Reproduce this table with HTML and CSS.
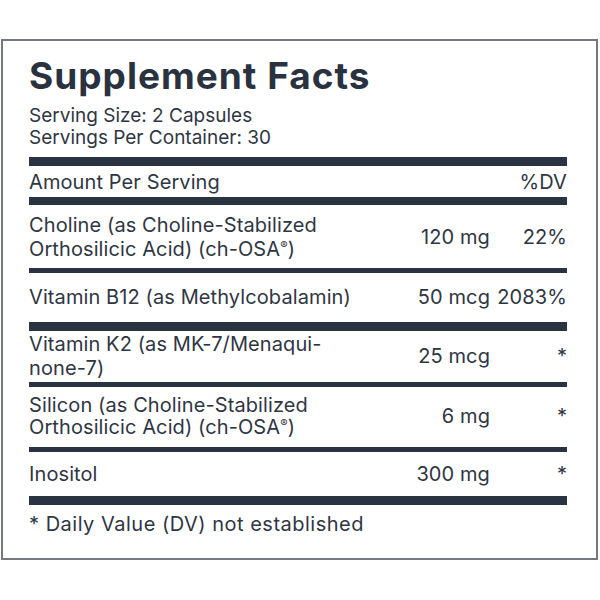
FILE: index.html
```html
<!DOCTYPE html>
<html lang="en">
<head>
<meta charset="utf-8">
<title>Supplement Facts</title>
<link rel="stylesheet" href="styles.css">
</head>
<body>
<div class="label">
  <h1 class="title">Supplement Facts</h1>
  <div class="serving">
    <p>Serving Size: 2 Capsules</p>
    <p>Servings Per Container: 30</p>
  </div>
  <div class="row head">
    <span class="name">Amount Per Serving</span>
    <span class="amt"></span>
    <span class="dv">%DV</span>
  </div>
  <div class="row r-choline thin">
    <span class="name">Choline (as Choline-Stabilized<br>Orthosilicic Acid) (ch-OSA<sup>®</sup>)</span>
    <span class="amt">120 mg</span>
    <span class="dv">22%</span>
  </div>
  <div class="row r-b12">
    <span class="name">Vitamin B12 (as Methylcobalamin)</span>
    <span class="amt">50 mcg</span>
    <span class="dv">2083%</span>
  </div>
  <div class="row r-k2 thin">
    <span class="name">Vitamin K2 (as MK-7/Menaqui-<br>none-7)</span>
    <span class="amt">25 mcg</span>
    <span class="dv">*</span>
  </div>
  <div class="row r-silicon thin">
    <span class="name">Silicon (as Choline-Stabilized<br>Orthosilicic Acid) (ch-OSA<sup>®</sup>)</span>
    <span class="amt">6 mg</span>
    <span class="dv">*</span>
  </div>
  <div class="row r-inositol">
    <span class="name">Inositol</span>
    <span class="amt">300 mg</span>
    <span class="dv">*</span>
  </div>
  <p class="foot">* Daily Value (DV) not established</p>
</div>
</body>
</html>
```

FILE: styles.css
```css
* { box-sizing: border-box; }

html, body {
  margin: 0;
  padding: 0;
  background: #ffffff;
}

body {
  font-family: Inter, Lato, "Liberation Sans", sans-serif;
  color: #2f3643;
}

.label {
  margin: 39px 2px 0 1px;
  width: 597px;
  height: 521px;
  border: 2px solid #75787e;
  padding: 16px 29px 0 26px;
}

.title {
  margin: 0;
  font-size: 37px;
  line-height: 37px;
  font-weight: 700;
  letter-spacing: 1px;
  color: #2a3240;
}

.serving {
  margin-top: 11px;
  padding-bottom: 8px;
  border-bottom: 9px solid #2a3341;
}

.serving p {
  margin: 0;
  font-size: 19px;
  line-height: 22px;
}

.row {
  display: flex;
  align-items: center;
  font-size: 20px;
  line-height: 24px;
  letter-spacing: 0.1px;
  border-bottom: 9px solid #2a3341;
}

.row.thin { border-bottom-width: 5px; }

.name { flex: 1; }

.amt {
  width: 110px;
  text-align: right;
}

.dv {
  width: 77px;
  text-align: right;
}

sup {
  font-size: 11px;
  line-height: 0;
  vertical-align: 7px;
}

.head {
  padding: 4px 0 3px;
  border-bottom-width: 8px;
}

.r-choline { padding: 8px 0 7px; }
.r-b12 { padding: 12px 0 13px; }
.r-k2 { padding: 1px 0 2px; }
.r-silicon { padding: 7px 0 9px; line-height: 22px; }
.r-inositol { padding: 10px 0 10px; }

.foot {
  margin: 0;
  padding-top: 7px;
  font-size: 20px;
  line-height: 24px;
  letter-spacing: 0.5px;
}
```
